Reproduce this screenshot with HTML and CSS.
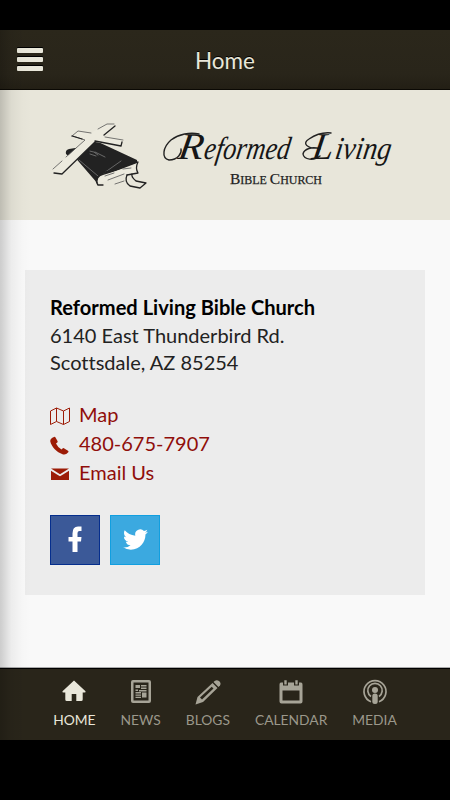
FILE: index.html
```
<!DOCTYPE html>
<html lang="en">
<head>
    <meta charset="UTF-8">
    <meta name="viewport" content="width=device-width, initial-scale=1.0">
    <title>Reformed Living Bible Church</title>
    <link rel="stylesheet" href="styles.css">
</head>
<body>

<div class="app">
    <header class="header">
        <button class="menu-btn" aria-label="Menu">
            <span></span>
            <span></span>
            <span></span>
        </button>
        <h1>Home</h1>
    </header>

    <div class="banner">
        <svg class="logo" viewBox="0 90 450 130">
            <!-- Bible -->
            <path class="ink" d="M69 149Q65 150 66 154Q68 157 73 155L98 184L103 176L137 163L137 160L94 140L88 146Z"/>
            <path class="shine" d="M79 160L98 176M104 173L121 161"/>
            <path class="gray-line" d="M90 151q4 0 8 4M95 152l10 5M90 154l6 2"/>
            <path class="paper" d="M103 175L136 165L138 173L125 174L103 182L98 184Q96 177 103 175Z"/>
            <path class="line" d="M102 173L120 168L137 162M103 173Q93 178 98 185L103 185M138 162Q135 168 138 173L127 175"/>
            <path class="thin" d="M105 176L114 173M108 180L124 174M123 169L131 168M115 184L124 181"/>
            <!-- Ribbon -->
            <path class="line" d="M127 175Q124 182 130 186L140 188L146 183L136 181Q131 177 132 174"/>
            <!-- Cross -->
            <path class="paper" d="M72 136L78 131L91 133L106 124L115 124L104 136L123 140L122 146L95 142L62 174L54 172L53 169L84 141Z"/>
            <path class="thin" d="M72 136L78 131L91 133M98 129L107 124L114 124M105 137L123 140M53 169L62 161M66 157L85 140L73 136"/>
            <path class="line" d="M115 126L104 135M72 136L82 139M122 142L121 146L95 141M95 142L62 174L54 173"/>

            <!-- Name with flourished capitals -->
            <path class="flourish" d="M181 149C182 153 178 160 169 160C161 158 163 147 171 140C179 134 190 132 199 134"/>
            <path class="flourish" d="M320 149C312 146 304 149 303 154C304 160 314 161 320 156M320 148C306 149 302 143 309 139C315 135 322 132 331 133"/>
            <!-- extra slant, pivoting on the baseline -->
            <g transform="translate(0 159) skewX(-9)">
                <text class="logo-name"><tspan class="cap" x="177" textLength="25" lengthAdjust="spacingAndGlyphs">R</tspan><tspan x="203" textLength="86" lengthAdjust="spacingAndGlyphs">eformed</tspan></text>
                <text class="logo-name"><tspan class="cap" x="311" textLength="21" lengthAdjust="spacingAndGlyphs">L</tspan><tspan x="334" textLength="56" lengthAdjust="spacingAndGlyphs">iving</tspan></text>
            </g>
            <text class="logo-sub" x="230" y="184" textLength="92" lengthAdjust="spacingAndGlyphs"><tspan class="cap">B</tspan>IBLE <tspan class="cap">C</tspan>HURCH</text>
        </svg>
    </div>

    <main class="content">
        <div class="card">
            <p class="address">
                <strong>Reformed Living Bible Church</strong><br>
                6140 East Thunderbird Rd.<br>
                Scottsdale, AZ 85254
            </p>
            <ul class="links">
                <li>
                    <svg viewBox="0 0 20 20"><path class="map-line" d="M.5 5L6.500 2L13.500 5L19.500 2V15.500L13.500 18.500L6.500 15.500L.5 18.500ZM6.500 2V15.500M13.500 5V18.500"/></svg>
                    <a href="#">Map</a>
                </li>
                <li>
                    <svg viewBox="0 0 20 20"><path d="M4 2Q5 1.500 5.500 2.500L7.500 6Q8 7 7 7.700L6 8.500Q7.500 12 11.500 14.500L12.500 13.500Q13.500 12.800 14.300 13.400L18 15.700Q19 16.500 18 17.500Q15.500 20.500 12 19C6.500 17 1.500 11.500.3 6.500Q-.2 3.800 4 2Z"/></svg>
                    <a href="#">480-675-7907</a>
                </li>
                <li>
                    <svg viewBox="0 0 20 20"><path d="M1 4.500H19L10 10.200ZM1 6.700L7 10.500L10 12.300L13 10.500L19 6.700V16H1Z"/></svg>
                    <a href="#">Email Us</a>
                </li>
            </ul>
            <div class="social">
                <a class="facebook" href="#" aria-label="Facebook">
                    <svg viewBox="0 0 50 50"><path d="M22.500 37V26.500H18.500V22H22.500V18.500Q22.500 11.500 28 11.500H31.500V16H29.500Q27.500 16 27.500 18V22H31.500L31 26.500H27.500V37Z"/></svg>
                </a>
                <a class="twitter" href="#" aria-label="Twitter">
                    <svg viewBox="0 0 24 24"><path d="M23.950 4.570a10 10 0 0 1-2.820.77 4.960 4.960 0 0 0 2.160-2.720c-.95.560-2 .960-3.130 1.180a4.920 4.920 0 0 0-8.380 4.480C7.690 8.090 4.070 6.130 1.640 3.160a4.820 4.820 0 0 0-.67 2.480c0 1.710.87 3.210 2.190 4.100a4.900 4.900 0 0 1-2.230-.62v.06a4.920 4.920 0 0 0 3.950 4.830 5 5 0 0 1-2.210.08 4.940 4.940 0 0 0 4.600 3.420A9.870 9.870 0 0 1 0 19.540a13.990 13.990 0 0 0 7.550 2.210c9.050 0 14-7.500 14-13.980 0-.21 0-.42-.02-.63a9.940 9.940 0 0 0 2.420-2.570Z"/></svg>
                </a>
            </div>
        </div>
    </main>

    <nav class="tabs">
        <a class="tab active" href="#">
            <svg viewBox="0 0 24 24"><path d="M12 .5L23.500 11.300Q24 12.500 22.500 12.500H20.700V19.500Q20.700 21 19.200 21H14.300V14H9.700V21H4.800Q3.300 21 3.300 19.500V12.500H1.500Q0 12.500.5 11.300Z"/></svg>
            HOME
        </a>
        <a class="tab" href="#">
            <svg viewBox="0 0 24 24"><path fill-rule="evenodd" d="M4 0H20Q22 0 22 2V21Q22 23 20 23H4Q2 23 2 21V2Q2 0 4 0ZM4.500 2.500V20.500H19.500V2.500Z"/><path d="M6.500 5H11V8H6.500ZM12 5H17.500V6.500H12ZM12 7.500H17.500V9H12ZM6.500 9.500H9V11H6.500ZM10 10H17.500V11.500H10ZM6.500 12H12V13.500H6.500ZM13 12.500H17.500V17.500H13ZM6.500 14.500H12V15.800H6.500ZM6.500 16.700H12V18H6.500Z"/></svg>
            NEWS
        </a>
        <a class="tab" href="#">
            <svg class="wide" viewBox="0 0 26 24"><path fill-rule="evenodd" d="M17.500 3L22.500 8L8 22L.5 24.500L2.500 17ZM5 17.500L7 19.500L18.500 8.500L16.700 6.700Z"/><path d="M18.500 2L20 .7Q22-.5 24 1Q26.500 3 25 5.500L23.500 7Z"/></svg>
            BLOGS
        </a>
        <a class="tab" href="#">
            <svg viewBox="0 0 24 24"><path fill-rule="evenodd" d="M2 2.500H4V5.500H9V2.500H15V5.500H20V2.500H22Q23.500 2.500 23.500 4.500V21.500Q23.500 23.500 21.500 23.500H2.500Q.5 23.500.5 21.500V4.500Q.5 2.500 2 2.500ZM3.500 10.500V20.500H20.500V10.500Z"/><path d="M5.300.3H7.700V4.500H5.300ZM16.300.3H18.700V4.500H16.300Z"/></svg>
            CALENDAR
        </a>
        <a class="tab" href="#">
            <svg viewBox="0 0 24 24"><circle cx="12" cy="10" r="3"/><rect x="9.300" y="13.500" width="5.400" height="10.500" rx="2.500"/><path class="wave" d="M8 21.800A11 11 0 1 1 16 21.800M8 16.500A7.200 7.200 0 1 1 16 16.500"/></svg>
            MEDIA
        </a>
    </nav>
</div>

</body>
</html>
```
FILE: styles.css
```
* {
    box-sizing: border-box;
}
body {
    font-family: Lato, sans-serif;
    font-variant-ligatures: none;
    background-color: #000;
    margin: 0;
    padding: 30px 0 60px;
}
a {
    color: inherit;
    text-decoration: none;
}
.app {
    position: relative;
    display: flex;
    flex-direction: column;
    height: 710px;
    background-color: #f9f9f9;
}
/* shadow along the left edge of the panel */
.app::after {
    content: "";
    position: absolute;
    top: 0;
    bottom: 0;
    left: 0;
    width: 32px;
    background: linear-gradient(to right, rgba(0,0,0,0.18), rgba(0,0,0,0.05) 35%, rgba(0,0,0,0.01) 70%, transparent);
    pointer-events: none;
}
.header {
    display: grid;
    grid-template-columns: 60px 1fr 60px;
    align-items: center;
    height: 60px;
    background: linear-gradient(#2b271b, #29251a 75%, #231f15);
    border-bottom: 1px solid #0b0904;
    color: #e9e7da;
}
.header h1 {
    margin: 0;
    padding-top: 1px;
    font-size: 22.500px;
    font-weight: 400;
    text-align: center;
    text-shadow: 0 -1px 0 #000;
}
.menu-btn {
    display: flex;
    flex-direction: column;
    gap: 4px;
    width: 26px;
    margin-left: 17px;
    padding: 0;
    background: none;
    border: none;
}
.menu-btn span {
    height: 5px;
    background-color: #e9e7da;
    border-radius: 1px;
    box-shadow: 0 -1px 0 #000;
}
.banner {
    height: 130px;
    background-color: #e8e6da;
}
.logo {
    display: block;
    width: 450px;
    height: 130px;
}
.ink {
    fill: #222;
}
.paper {
    fill: #eceade;
}
.line, .thin, .flourish, .shine, .gray-line {
    fill: none;
    stroke: #222;
    stroke-width: 1.3;
    stroke-linecap: round;
    stroke-linejoin: round;
}
.thin {
    stroke: #555;
    stroke-width: 0.8;
}
.flourish {
    stroke-width: 1.4;
}
.shine {
    stroke: #666;
    stroke-width: 1;
}
.gray-line {
    stroke: #888;
    stroke-width: 0.7;
}
.logo-name {
    font-family: "Liberation Serif", serif;
    font-size: 32px;
    font-style: italic;
    fill: #161616;
}
.logo-name .cap {
    font-size: 38px;
}
.logo-sub {
    font-family: "Liberation Serif", serif;
    font-size: 12px;
    fill: #222;
    stroke: #222;
    stroke-width: 0.25;
}
.logo-sub .cap {
    font-size: 15.500px;
}
.content {
    flex: 1;
    padding: 50px 25px 0;
}
.card {
    height: 325px;
    padding: 24px 25px;
    background-color: #ececec;
}
.address {
    margin: 0 0 23px;
    font-size: 20px;
    line-height: 27.500px;
    color: #222;
}
.address strong {
    font-size: 20.100px;
    color: #000;
}
.links {
    margin: 0 0 28px;
    padding: 0;
    list-style: none;
    font-size: 20px;
    line-height: 29px;
    color: #900e0a;
}
.links li {
    display: flex;
    align-items: center;
    gap: 9px;
    height: 29px;
}
.links svg {
    width: 20px;
    height: 20px;
    margin-top: 4px;
    fill: #9c1b06;
}
.links .map-line {
    fill: none;
    stroke: #9c1b06;
    stroke-width: 1;
}
.social {
    display: flex;
    gap: 10px;
}
.social a {
    display: flex;
    align-items: center;
    justify-content: center;
    width: 50px;
    height: 50px;
    border: 1px solid #052e8d;
    background-color: #3b5998;
}
.social .twitter {
    border-color: #119fe0;
    background-color: #3ba9e0;
}
.social svg {
    width: 50px;
    height: 50px;
    flex: none;
    fill: #fff;
}
.social .twitter svg {
    width: 25px;
    height: 25px;
    margin-top: -1px;
}
.tabs {
    display: flex;
    justify-content: center;
    gap: 25px;
    height: 73px;
    padding-top: 12px;
    border-top: 1px solid #aaa;
    box-shadow: inset 0 1px 0 #000;
    background-color: #29251a;
}
.tab {
    display: flex;
    flex-direction: column;
    align-items: center;
    gap: 7px;
    font-size: 13.800px;
    line-height: 17px;
    color: #9b988b;
}
.tab svg {
    width: 24px;
    height: 24px;
    fill: #a7a497;
    overflow: visible;
}
.tab svg.wide {
    width: 26px;
}
.tab .wave {
    fill: none;
    stroke: #a7a497;
    stroke-width: 1.700;
}
.tab.active {
    color: #e9e7da;
}
.tab.active svg {
    fill: #e9e7da;
}
```
